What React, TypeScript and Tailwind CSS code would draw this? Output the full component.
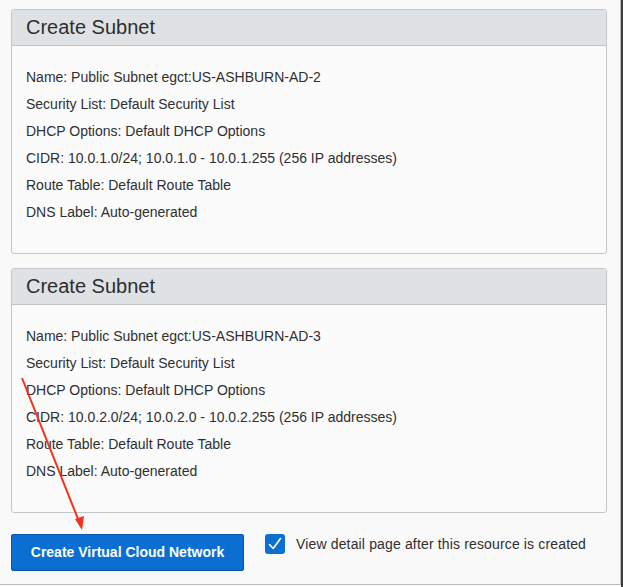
const subnets = [
  {
    name: 'Public Subnet egct:US-ASHBURN-AD-2',
    cidr: '10.0.1.0/24; 10.0.1.0 - 10.0.1.255 (256 IP addresses)',
  },
  {
    name: 'Public Subnet egct:US-ASHBURN-AD-3',
    cidr: '10.0.2.0/24; 10.0.2.0 - 10.0.2.255 (256 IP addresses)',
  },
];

function SubnetPanel({ name, cidr }: { name: string; cidr: string }) {
  const rows = [
    `Name: ${name}`,
    'Security List: Default Security List',
    'DHCP Options: Default DHCP Options',
    `CIDR: ${cidr}`,
    'Route Table: Default Route Table',
    'DNS Label: Auto-generated',
  ];
  return (
    <div className="w-[596px] border border-[#c3c7cb] rounded-[3px] bg-[#fbfbfb] overflow-hidden">
      <div className="h-[36px] bg-[#dfe2e5] border-b border-[#bfc4c9] px-[14px] pb-[2px] flex items-center text-[20px] text-[#2e2e2e]">
        Create Subnet
      </div>
      <div className="pt-[18px] pb-[27px] px-[14px] text-[14px] leading-[27px] text-[#2f2f2f]">
        {rows.map((r) => (
          <div key={r}>{r}</div>
        ))}
      </div>
    </div>
  );
}

export default function App() {
  return (
    <div
      className="relative w-[623px] h-[587px] bg-white flex"
      style={{ fontFamily: '"Liberation Sans", Arial, sans-serif' }}
    >
      <div className="w-[621px] h-[585px] bg-[#f9f9f9] border-r border-b border-[#b9b9b9] pl-[11px] pt-[9px] flex flex-col">
        <div className="flex flex-col gap-[14px]">
          {subnets.map((s) => (
            <SubnetPanel key={s.name} name={s.name} cidr={s.cidr} />
          ))}
        </div>
        <div className="mt-[21px] flex items-start">
          <button
            type="button"
            className="w-[233px] h-[37px] bg-[#0a6fd0] border border-[#0558ae] rounded-[2px] text-white font-bold text-[14px]"
          >
            Create Virtual Cloud Network
          </button>
          <label className="ml-[21px] flex items-start gap-[11px] text-[14px] leading-[20px] text-[#2f2f2f] tracking-[0.15px]">
            <span className="w-[20px] h-[20px] rounded-[3px] bg-[#0a6fd0] flex items-center justify-center">
              <svg width="16" height="16" viewBox="0 0 16 16" fill="none">
                <path d="M2.5 8.5 L6.2 12.5 L13.5 2.5" stroke="white" strokeWidth="1.6" strokeLinecap="round" strokeLinejoin="round" />
              </svg>
            </span>
            View detail page after this resource is created
          </label>
        </div>
      </div>
      <div className="w-[2px] h-full bg-[#3d3d3d]" />

      {/* red annotation arrow */}
      <svg className="absolute left-0 top-0 pointer-events-none" width="623" height="587">
        <line x1="22" y1="378" x2="80" y2="524" stroke="#f2301c" strokeWidth="2" />
        <polygon points="82,530 75,519 84,516" fill="#f2301c" />
      </svg>
    </div>
  );
}
